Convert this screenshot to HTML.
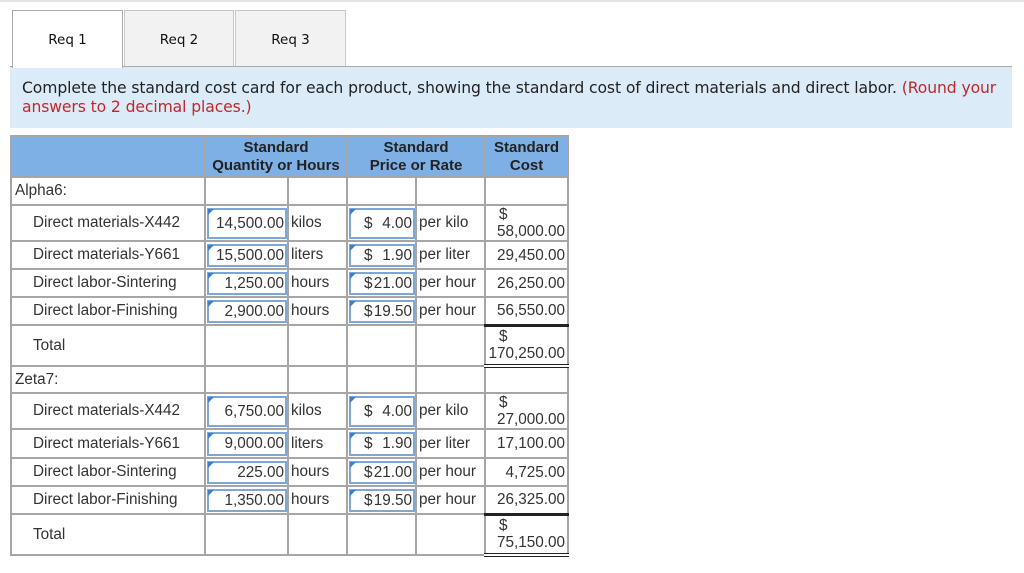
<!DOCTYPE html>
<html><head><style>
body{margin:0;width:1024px;height:573px;background:#fff;position:relative;overflow:hidden;font-family:"Liberation Sans",Arial,sans-serif;}
.topline{position:absolute;left:0;top:0;width:1024px;height:2px;background:#e4e4e4}
.tab{position:absolute;top:10px;height:56px;background:#f2f2f2;border:1px solid #c8c8c8;border-bottom:none;box-sizing:border-box;font-family:"DejaVu Sans",Verdana,sans-serif;font-size:13.5px;text-align:center;line-height:58px;color:#111}
.tab.act{background:#fff;border:1px solid #aaa;border-bottom:none;height:58px;z-index:2}
.box{position:absolute;left:10px;top:66px;width:1002px;height:62px;background:#dcebf8;border-top:1px solid #aaa;box-sizing:border-box;font-family:"DejaVu Sans",Verdana,sans-serif;font-size:15.6px;color:#222;padding:12px 12px;line-height:19px;letter-spacing:-0.1px}
.red{color:#c0282d}
table{position:absolute;left:10px;top:135px;border-collapse:collapse;font-size:15.3px;color:#333;table-layout:fixed}
td{border:2px solid #a6a6a6;padding:0;box-sizing:border-box;vertical-align:middle;position:relative;white-space:nowrap;overflow:visible}
th{background:#7eb0e6;border:2px solid #a6a6a6;font-weight:bold;font-size:15px;color:#222;line-height:18px;padding:0}
.lab{padding-left:21px}
.grp{padding-left:3px}
.inp{position:absolute;left:1px;right:0;top:2px;bottom:1px;border:2px solid #7ea7d8;text-align:right;padding-right:1px;box-sizing:border-box;display:flex;align-items:center;justify-content:flex-end}
.inp:before{content:"";position:absolute;left:-1px;top:-1px;border-left:6px solid #3a7fd0;border-bottom:6px solid transparent;border-top:0;}
.pr{justify-content:space-between;padding-left:13px}
.u{padding-left:2px;white-space:nowrap}
.c{text-align:right;padding-right:2px;line-height:17px}
.d{display:block;text-align:left;padding-left:13px}
.tot{border-bottom:4px double #222 !important}
.tt{border-top:3px solid #222 !important}
</style></head><body>
<div class="topline"></div>
<div class="tab act" style="left:12px;width:111px">Req 1</div>
<div class="tab" style="left:124px;width:110px">Req 2</div>
<div class="tab" style="left:235px;width:111px">Req 3</div>
<div class="box">Complete the standard cost card for each product, showing the standard cost of direct materials and direct labor. <span class="red">(Round your answers to 2 decimal places.)</span></div>
<table style="width:557px">
<colgroup><col style="width:194px"><col style="width:83px"><col style="width:59px"><col style="width:69px"><col style="width:69px"><col style="width:83px"></colgroup>
<tr style="height:41px"><th></th><th colspan="2">Standard<br>Quantity or Hours</th><th colspan="2">Standard<br>Price or Rate</th><th>Standard<br>Cost</th></tr>
<tr style="height:28px"><td class="grp">Alpha6:</td><td></td><td></td><td></td><td></td><td></td></tr>
<tr style="height:35px"><td class="lab">Direct materials-X442</td><td><div class="inp">14,500.00</div></td><td class="u">kilos</td><td><div class="inp pr"><span>$</span><span>4.00</span></div></td><td class="u">per kilo</td><td class="c"><span class="d">$</span>58,000.00</td></tr>
<tr style="height:28px"><td class="lab">Direct materials-Y661</td><td><div class="inp">15,500.00</div></td><td class="u">liters</td><td><div class="inp pr"><span>$</span><span>1.90</span></div></td><td class="u">per liter</td><td class="c">29,450.00</td></tr>
<tr style="height:28px"><td class="lab">Direct labor-Sintering</td><td><div class="inp">1,250.00</div></td><td class="u">hours</td><td><div class="inp pr"><span>$</span><span>21.00</span></div></td><td class="u">per hour</td><td class="c">26,250.00</td></tr>
<tr style="height:28px"><td class="lab">Direct labor-Finishing</td><td><div class="inp">2,900.00</div></td><td class="u">hours</td><td><div class="inp pr"><span>$</span><span>19.50</span></div></td><td class="u">per hour</td><td class="c">56,550.00</td></tr>
<tr style="height:41px"><td class="lab">Total</td><td></td><td></td><td></td><td></td><td class="c tt tot"><span class="d">$</span>170,250.00</td></tr>
<tr style="height:27px"><td class="grp">Zeta7:</td><td></td><td></td><td></td><td></td><td></td></tr>
<tr style="height:35px"><td class="lab">Direct materials-X442</td><td><div class="inp">6,750.00</div></td><td class="u">kilos</td><td><div class="inp pr"><span>$</span><span>4.00</span></div></td><td class="u">per kilo</td><td class="c"><span class="d">$</span>27,000.00</td></tr>
<tr style="height:29px"><td class="lab">Direct materials-Y661</td><td><div class="inp">9,000.00</div></td><td class="u">liters</td><td><div class="inp pr"><span>$</span><span>1.90</span></div></td><td class="u">per liter</td><td class="c">17,100.00</td></tr>
<tr style="height:28px"><td class="lab">Direct labor-Sintering</td><td><div class="inp">225.00</div></td><td class="u">hours</td><td><div class="inp pr"><span>$</span><span>21.00</span></div></td><td class="u">per hour</td><td class="c">4,725.00</td></tr>
<tr style="height:28px"><td class="lab">Direct labor-Finishing</td><td><div class="inp">1,350.00</div></td><td class="u">hours</td><td><div class="inp pr"><span>$</span><span>19.50</span></div></td><td class="u">per hour</td><td class="c">26,325.00</td></tr>
<tr style="height:41px"><td class="lab">Total</td><td></td><td></td><td></td><td></td><td class="c tt tot"><span class="d">$</span>75,150.00</td></tr>
</table>
</body></html>
